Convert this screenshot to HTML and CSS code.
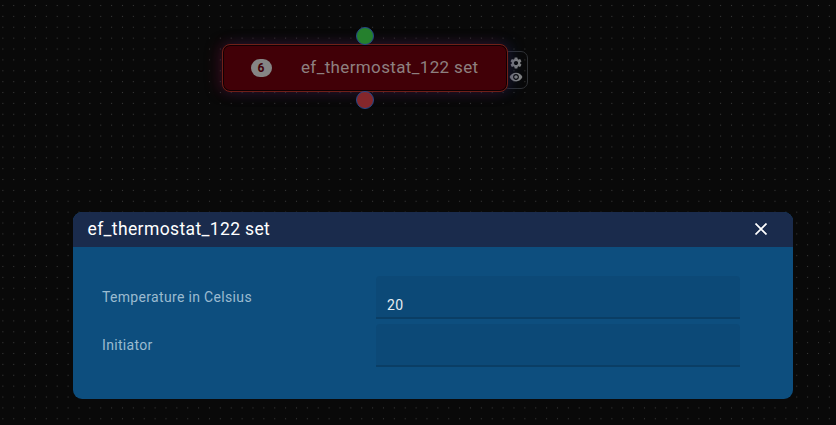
FILE: index.html
```html
<!DOCTYPE html>
<html lang="en">
<head>
<meta charset="utf-8">
<title>Flow editor</title>
<link rel="stylesheet" href="styles.css">
</head>
<body>
<main class="canvas">
  <div class="node">
    <div class="node-tools">
      <svg viewBox="0 0 24 24"><path d="M19.14 12.94c.04-.3.06-.61.06-.94 0-.32-.02-.64-.07-.94l2.03-1.58c.18-.14.23-.41.12-.61l-1.92-3.32c-.12-.22-.37-.29-.59-.22l-2.39.96c-.5-.38-1.03-.7-1.62-.94l-.36-2.54c-.04-.24-.24-.41-.48-.41h-3.84c-.24 0-.43.17-.47.41l-.36 2.54c-.59.24-1.13.57-1.62.94l-2.39-.96c-.22-.08-.47 0-.59.22L2.74 8.87c-.12.21-.08.47.12.61l2.03 1.58c-.05.3-.09.63-.09.94s.02.64.07.94l-2.03 1.58c-.18.14-.23.41-.12.61l1.92 3.32c.12.22.37.29.59.22l2.39-.96c.5.38 1.03.7 1.62.94l.36 2.54c.05.24.24.41.48.41h3.84c.24 0 .44-.17.47-.41l.36-2.54c.59-.24 1.13-.56 1.62-.94l2.39.96c.22.08.47 0 .59-.22l1.92-3.32c.12-.22.07-.47-.12-.61l-2.01-1.58zM12 15.6c-1.98 0-3.6-1.62-3.6-3.6s1.62-3.6 3.6-3.6 3.6 1.62 3.6 3.6-1.62 3.6-3.6 3.6z"/></svg>
      <svg viewBox="0 0 24 24"><path d="M12 4.5C7 4.500 2.730 7.610 1 12c1.730 4.390 6 7.500 11 7.500s9.270-3.110 11-7.500c-1.730-4.390-6-7.500-11-7.500zM12 17c-2.760 0-5-2.240-5-5s2.240-5 5-5 5 2.240 5 5-2.240 5-5 5zm0-8c-1.660 0-3 1.340-3 3s1.340 3 3 3 3-1.340 3-3-1.340-3-3-3z"/></svg>
    </div>
    <div class="node-body">
      <span class="badge">6</span>
      <span class="node-title">ef_thermostat_122 set</span>
    </div>
    <i class="port port-in"></i>
    <i class="port port-out"></i>
  </div>
  <section class="dialog">
    <header class="dialog-head">
      <h1>ef_thermostat_122 set</h1>
      <svg class="close" viewBox="0 0 12 12"><path d="M.5.5l11 11M11.500.5l-11 11"/></svg>
    </header>
    <form class="dialog-body">
      <label for="temp">Temperature in Celsius</label>
      <input id="temp" type="text" value="20">
      <label for="init">Initiator</label>
      <input id="init" type="text">
    </form>
  </section>
</main>
</body>
</html>
```
FILE: styles.css
```css
* { box-sizing: border-box; }
body { margin: 0; background: #090909; font-family: Roboto, sans-serif; }
.canvas {
  position: relative;
  height: 425px;
  overflow: hidden;
  background-image: radial-gradient(circle, #393939 0.5px, transparent 1px);
  background-size: 10.89px 10.89px;
  background-position: -2.6px 0.1px;
}
.node { position: absolute; left: 221.5px; top: 43.5px; width: 286px; height: 48px; }
.node-body {
  position: relative;
  display: flex;
  align-items: center;
  height: 100%;
  padding-left: 28px;
  border: 1px solid #702018;
  border-radius: 8px;
  background: #410007;
  box-shadow: inset 0 0 0 1px #100003, -4px 0 14px rgba(110, 10, 40, .38), 4px 0 14px rgba(18, 45, 100, .4);
}
.badge {
  width: 21px;
  height: 18px;
  border-radius: 9px;
  background: #858585;
  color: #410007;
  font-size: 12px;
  font-weight: 700;
  line-height: 18px;
  text-align: center;
}
.node-title { margin: 0 0 2px 29.5px; color: #8e8080; font-size: 17px; letter-spacing: .36px; white-space: nowrap; }
.port { position: absolute; left: 134px; width: 18px; height: 18px; border: 1px solid #24488a; border-radius: 50%; }
.port-in { top: -17px; background: #25802d; }
.port-out { bottom: -17px; background: #84272b; }
.node-tools {
  position: absolute;
  left: 280px;
  top: 7px;
  display: flex;
  flex-direction: column;
  width: 26px;
  height: 38px;
  padding: 4px 0 0 6.5px;
  border: 1px solid #303236;
  border-radius: 7px;
}
.node-tools svg { width: 14px; height: 14px; fill: #858585; }
.dialog {
  position: absolute;
  left: 73px;
  top: 212px;
  width: 720px;
  height: 187px;
  border-radius: 9px;
  overflow: hidden;
  background: #0d4e7e;
}
.dialog-head {
  display: flex;
  align-items: center;
  justify-content: space-between;
  height: 35px;
  padding: 0 26px 1px 14.5px;
  background: #1a2b4c;
}
.dialog-head h1 { margin: 0 0 1px; color: #fff; font-size: 17.5px; font-weight: 400; letter-spacing: .37px; }
.close { width: 12px; height: 12px; fill: none; stroke: #fff; stroke-width: 1.7; }
.dialog-body {
  display: grid;
  grid-template-columns: 274px 364px;
  row-gap: 5px;
  align-items: center;
  padding: 29px 0 0 29px;
}
.dialog-body label { padding-bottom: 2px; color: #9bbbd0; font-size: 14px; letter-spacing: .33px; }
.dialog-body input {
  width: 100%;
  height: 43px;
  padding: 16px 11px 0;
  border: 0;
  border-bottom: 2px solid #0a3e65;
  border-radius: 4px 4px 0 0;
  outline: 0;
  background: #0c4977;
  color: #e7edf1;
  font: 14px Roboto, sans-serif;
  letter-spacing: .3px;
}
```
